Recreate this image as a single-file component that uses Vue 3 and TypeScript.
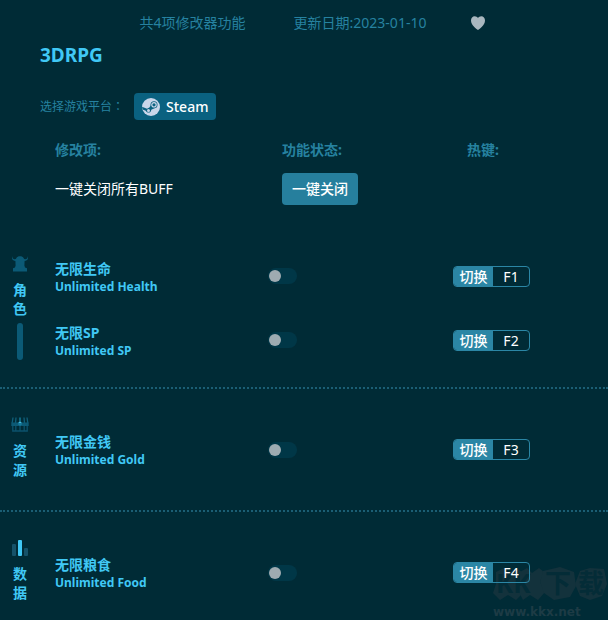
<script setup lang="ts">
import { reactive } from 'vue'

interface Option {
  name: string
  english: string
  key: string
  enabled: boolean
}

interface Category {
  id: 'role' | 'resource' | 'data'
  label: string
  options: Option[]
}

const categories = reactive<Category[]>([
  {
    id: 'role',
    label: '角色',
    options: [
      { name: '无限生命', english: 'Unlimited Health', key: 'F1', enabled: false },
      { name: '无限SP', english: 'Unlimited SP', key: 'F2', enabled: false },
    ],
  },
  {
    id: 'resource',
    label: '资源',
    options: [{ name: '无限金钱', english: 'Unlimited Gold', key: 'F3', enabled: false }],
  },
  {
    id: 'data',
    label: '数据',
    options: [{ name: '无限粮食', english: 'Unlimited Food', key: 'F4', enabled: false }],
  },
])

function toggle(option: Option): void {
  option.enabled = !option.enabled
}

function disableAll(): void {
  for (const category of categories) {
    for (const option of category.options) option.enabled = false
  }
}
</script>

<template>
  <main class="trainer">
    <header class="head">
      <div class="meta">
        <span>共4项修改器功能</span>
        <span>更新日期:2023-01-10</span>
        <button class="heart" type="button">
          <svg width="16" height="16" viewBox="0 0 16 16" fill="#a9b7bf">
            <path d="M8 15C6.300 13.800 1 10 1 5.400C1 2.900 2.600 1.200 4.700 1.200C6.100 1.200 7.300 1.900 8 3C8.700 1.900 9.900 1.200 11.300 1.200C13.400 1.200 15 2.900 15 5.400C15 10 9.700 13.800 8 15Z" />
          </svg>
        </button>
      </div>
      <h1>3DRPG</h1>
      <div class="platform">
        <span>选择游戏平台<span class="colon">：</span></span>
        <button class="steam" type="button">
          <svg width="18" height="18" viewBox="0 0 18 18">
            <circle cx="9" cy="9" r="9" fill="#c9d6ea" />
            <path d="M0 8.800L5 10.800L7.400 9.600L9 7L13.500 9.800L9.300 11.800C9.100 13.800 7.900 14.600 6.500 14.600C5.200 14.600 4.200 14 3.800 12.800L.6 11.500Z" fill="#0a6180" />
            <circle cx="12" cy="6.800" r="3.500" fill="#0a6180" />
            <circle cx="12" cy="6.800" r="2.200" fill="none" stroke="#c9d6ea" stroke-width="1.200" />
            <circle cx="6.500" cy="12.400" r="1.500" fill="#c9d6ea" />
          </svg>
          Steam
        </button>
      </div>
    </header>

    <section class="summary">
      <div class="columns titles">
        <span>修改项:</span>
        <span class="inset">功能状态:</span>
        <span class="inset">热键:</span>
      </div>
      <div class="columns all">
        <span>一键关闭所有BUFF</span>
        <div class="inset">
          <button class="close-all" type="button" @click="disableAll">一键关闭</button>
        </div>
      </div>
    </section>

    <section v-for="category in categories" :key="category.id" class="category">
      <div class="side">
        <svg v-if="category.id === 'role'" width="16" height="16" viewBox="0 0 16 16" fill="#0b5a76">
          <path d="M.6 0C.2 1.600.8 3 2.600 3.200C3.400 3.300 4 3 4.300 2.200C5 .8 6.300 .2 8 .2S11 .8 11.700 2.200C12 3 12.600 3.300 13.400 3.200C15.200 3 15.800 1.600 15.400 0C16.400 2 16 4.300 13.700 4.800L12.600 5L12.400 9.500L13 11.500L15 12.200V15.400H1V12.200L3 11.500L3.600 9.500L3.400 5L2.300 4.800C0 4.300-.4 2 .6 0Z" />
        </svg>
        <svg v-else-if="category.id === 'resource'" width="18" height="16" viewBox="0 0 18 16">
          <path d="M2 .5L1.200 6M5 .5L4.500 6M13 .5L13.500 6M16 .5L16.800 6" stroke="#0f5f7a" stroke-width="1.300" fill="none" />
          <path d="M9 .5V4" stroke="#1685a5" stroke-width="1.300" />
          <path d="M.3 5.500H17.700V9H.3Z" fill="#0c5a75" />
          <path d="M1.800 9V14H16.200V9M4.800 9V14M13.200 9V14M9 9V14" stroke="#0b526c" stroke-width="1.300" fill="none" />
          <path d="M7.200 5H10.800V7.500L9 9L7.200 7.500Z" fill="#157899" />
          <path d="M8 4.500H10V6H8Z" fill="#45b9dc" />
        </svg>
        <svg v-else width="16" height="16" viewBox="0 0 16 16">
          <rect y="4" width="4" height="12" rx="1" fill="#165269" />
          <rect x="6" width="4" height="16" rx="1" fill="#40c8f5" />
          <rect x="12" y="8" width="4" height="8" rx="1" fill="#165269" />
        </svg>
        <h2>{{ category.label }}</h2>
        <i v-if="category.options.length > 1" class="bar"></i>
      </div>
      <div class="options">
        <div v-for="option in category.options" :key="option.key" class="columns option">
          <label :for="option.key" class="name">
            {{ option.name }}
            <small>{{ option.english }}</small>
          </label>
          <input :id="option.key" v-model="option.enabled" class="switch" type="checkbox" role="switch" />
          <button class="hotkey" type="button" @click="toggle(option)">
            <span class="action">切换</span>
            <span class="key">{{ option.key }}</span>
          </button>
        </div>
      </div>
    </section>

    <svg class="watermark" width="116" height="58" viewBox="0 0 116 58">
      <g fill="#13323c">
        <path d="M4 10L12 6L17 11L24 6L30 10L26 20L31 31L24 38L16 33L8 38L1 31L4 22Z" />
        <path d="M28 10L35 6L40 11L47 6L52 10L48 20L53 30L46 38L38 33L31 38L27 30Z" />
        <path d="M51 9L68 5L82 10L84 24L78 35L62 38L52 31L48 20Z" />
        <path d="M88 9L98 6L112 7L115 22L110 34L98 38L88 34L83 22Z" />
      </g>
      <text class="mark" x="4" y="31">KK</text>
      <text class="mark" x="53" y="31">下</text>
      <text class="mark" x="86" y="31">载</text>
      <text class="site" x="1" y="54">www.kkx.net</text>
    </svg>
  </main>
</template>

<style>
body {
  margin: 0;
  background: #002b36;
}
</style>

<style scoped>
.trainer {
  position: relative;
  isolation: isolate;
  min-height: 100vh;
  box-sizing: border-box;
  overflow: hidden;
  background: #002b36;
  color: #2682a0;
  font-family: "Noto Sans", "Noto Sans CJK SC", sans-serif;
  font-size: 14px;
  line-height: 20px;
}

button {
  padding: 0;
  border: 0;
  background: none;
  color: #fff;
  font: inherit;
  cursor: pointer;
}

svg {
  display: block;
  flex: none;
}

.head {
  padding: 13px 40px 0;
}

.meta {
  display: flex;
  align-items: center;
  justify-content: center;
  gap: 48px;
  padding-left: 18px;
}

.heart {
  margin-left: -4px;
}

h1 {
  margin: 8px 0 0;
  color: #40c8f5;
  font-size: 19px;
  font-weight: 700;
  line-height: 28px;
}

.platform {
  display: flex;
  align-items: center;
  gap: 10px;
  margin-top: 24px;
  font-size: 12px;
}

.colon {
  font-family: "Noto Sans CJK TC", sans-serif;
}

.steam {
  display: flex;
  align-items: center;
  gap: 6px;
  height: 27px;
  padding: 0 8px;
  border-radius: 4px;
  background: #0a6180;
  font-size: 14px;
  font-weight: 500;
}

.columns {
  display: grid;
  grid-template-columns: 213fr 185fr 155fr;
  align-items: center;
}

.inset {
  padding-left: 14px;
}

.summary {
  padding: 20px 0 23px 55px;
}

.titles {
  font-weight: 700;
}

.all {
  margin-top: 13px;
  color: #fff;
}

.close-all {
  height: 32px;
  padding: 0 10px;
  border-radius: 4px;
  background: #267f9d;
  font-weight: 500;
}

.category {
  display: grid;
  grid-template-columns: 40px 1fr;
  gap: 15px;
  align-items: center;
  padding: 28px 0;
}

.summary + .category {
  padding-bottom: 27px;
}

.category + .category {
  border-top: 2px dotted #1b5e74;
}

.category:last-of-type {
  padding-bottom: 12px;
}

.side {
  display: flex;
  flex-direction: column;
  align-items: center;
  min-height: 65px;
}

h2 {
  width: 14px;
  margin: 8px 0 0;
  color: #40c8f5;
  font-size: 14px;
  font-weight: 700;
  line-height: 19px;
  word-break: break-all;
}

.bar {
  width: 6px;
  height: 37px;
  margin-top: 5px;
  border-radius: 3px;
  background: #0b5a76;
}

.options {
  display: grid;
  gap: 25px;
}

.name {
  padding-top: 3px;
  color: #40c8f5;
  font-weight: 700;
  line-height: 18px;
}

.name small {
  display: block;
  font-size: 12px;
}

.switch {
  display: flex;
  align-items: center;
  appearance: none;
  width: 29px;
  height: 16px;
  margin: 0;
  padding: 0 1px;
  border-radius: 8px;
  background: #003747;
  cursor: pointer;
}

.switch::before {
  content: "";
  width: 12px;
  height: 12px;
  border-radius: 50%;
  background: #9eabb1;
}

.switch:checked {
  justify-content: flex-end;
  background: #267f9d;
}

.hotkey {
  display: flex;
  width: 77px;
  height: 21px;
  box-sizing: border-box;
  overflow: hidden;
  border: 1px solid #2b86a5;
  border-radius: 4px;
  line-height: 19px;
}

.action {
  width: 39px;
  background: #2b86a5;
  font-weight: 500;
}

.key {
  flex: 1;
}

.watermark {
  position: absolute;
  z-index: -1;
  right: 0;
  bottom: 0;
  pointer-events: none;
}

.mark {
  fill: #042c37;
  font-size: 26px;
  font-weight: 700;
}

.site {
  fill: #1d3b45;
  font-family: "DejaVu Sans", sans-serif;
  font-size: 12px;
  font-weight: 700;
}
</style>
